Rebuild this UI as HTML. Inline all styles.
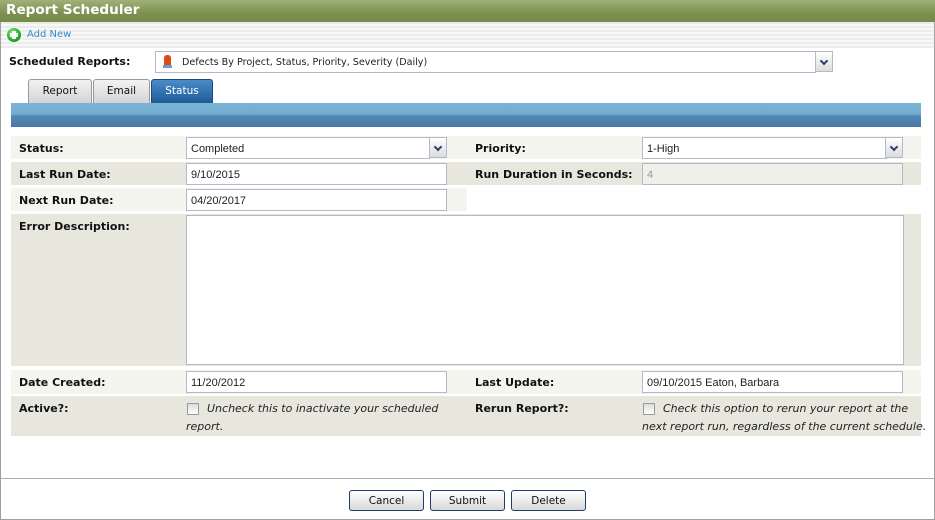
<!DOCTYPE html><html><head><style>
*{margin:0;padding:0;box-sizing:border-box}
body{width:935px;height:520px;position:relative;background:#fff;font-family:"Liberation Sans",sans-serif;overflow:hidden}
.a{position:absolute}
.lbl{position:absolute;font-family:"DejaVu Sans",sans-serif;font-weight:bold;font-size:11px;color:#111}
.inp{position:absolute;border:1px solid #b4b8c8;background:#fff;font-size:11px;color:#222;padding:5px 0 0 4px;height:22px}
.dd{position:absolute;width:18px;border:1px solid #b4b8c8;background:linear-gradient(#fff,#dcdcdc)}
.dd:after{content:"";position:absolute;left:5px;top:6px;width:4px;height:4px;border-right:2px solid #2a3e70;border-bottom:2px solid #2a3e70;transform:rotate(45deg)}
.tab{position:absolute;top:79px;height:24px;border:1px solid #999;border-bottom:none;border-radius:3px 3px 0 0;background:linear-gradient(#f2f2f2,#d4d4d4);font-family:"DejaVu Sans",sans-serif;font-size:10.5px;text-align:center;padding-top:5px;color:#111}
.btn{position:absolute;top:490px;height:21px;border:1px solid #203c6c;border-radius:3px;background:linear-gradient(#fff,#d8d8d8);font-family:"DejaVu Sans",sans-serif;font-size:10.5px;text-align:center;padding-top:4px;color:#111}
.it{position:absolute;font-family:"DejaVu Sans",sans-serif;font-style:italic;font-size:11px;color:#222;line-height:18px}
.cb{position:absolute;width:12px;height:12px;border:1px solid #999;background:linear-gradient(#ddd,#fff)}
</style></head><body>
<div class="a" style="left:0;top:0;width:935px;height:520px;border:1px solid #a0a0a0;border-top:none"></div>
<div class="a" style="left:0;top:0;width:935px;height:22px;background:linear-gradient(#9fb078,#7c9150 60%,#768a4a)"></div>
<div class="a" style="left:6px;top:2px;font-family:'DejaVu Sans',sans-serif;font-weight:bold;font-size:13.6px;color:#fff">Report Scheduler</div>
<div class="a" style="left:1px;top:22px;width:933px;height:26px;background:repeating-linear-gradient(#ececec 0,#ececec 2px,#f8f8f8 2px,#f8f8f8 4px)"></div>
<div class="a" style="left:7px;top:28px;width:14px;height:14px;border-radius:50%;background:radial-gradient(circle at 40% 35%,#8e8,#2a2 60%,#171);"></div>
<div class="a" style="left:12px;top:31px;width:4px;height:8px;background:#fff"></div>
<div class="a" style="left:10px;top:33px;width:8px;height:4px;background:#fff"></div>
<div class="a" style="left:27px;top:29px;font-family:'DejaVu Sans',sans-serif;font-size:10px;color:#3c88c8">Add New</div>
<div class="lbl" style="left:9px;top:55px">Scheduled Reports:</div>
<div class="inp" style="left:155px;top:51px;width:661px;height:22px;padding-left:26px;font-family:'DejaVu Sans',sans-serif;font-size:9.6px">Defects By Project, Status, Priority, Severity (Daily)</div>
<div class="a" style="left:164px;top:55px;width:7px;height:12px;background:#e04818;border-radius:3px 3px 1px 1px"></div>
<div class="a" style="left:163px;top:65px;width:9px;height:3px;background:#6aa0d0"></div>
<div class="dd" style="left:815px;top:51px;height:21px"></div>
<div class="tab" style="left:28px;width:64px">Report</div>
<div class="tab" style="left:93px;width:57px">Email</div>
<div class="tab" style="left:151px;width:62px;background:linear-gradient(#4a8cc8,#1e5a98);color:#fff;border-color:#1e4878">Status</div>
<div class="a" style="left:11px;top:103px;width:910px;height:24px;background:linear-gradient(#7ab4d4 0,#74acd0 45%,#5088b4 55%,#4a78a6)"></div>
<div class="a" style="left:11px;top:136px;width:910px;height:23px;background:#f5f5ef"></div>
<div class="a" style="left:11px;top:162px;width:910px;height:23px;background:#e8e7de"></div>
<div class="a" style="left:11px;top:188px;width:456px;height:23px;background:#f5f5ef"></div>
<div class="a" style="left:11px;top:214px;width:910px;height:152px;background:#e8e7de"></div>
<div class="a" style="left:11px;top:370px;width:910px;height:24px;background:#f5f5ef"></div>
<div class="a" style="left:11px;top:396px;width:910px;height:40px;background:#e8e7de"></div>
<div class="lbl" style="left:19px;top:142px">Status:</div>
<div class="inp" style="left:186px;top:137px;width:244px;height:22px;border-right:none">Completed</div>
<div class="dd" style="left:429px;top:137px;height:21px"></div>
<div class="lbl" style="left:475px;top:142px">Priority:</div>
<div class="inp" style="left:642px;top:137px;width:245px;height:22px;border-right:none">1-High</div>
<div class="dd" style="left:885px;top:137px;height:21px"></div>
<div class="lbl" style="left:19px;top:168px">Last Run Date:</div>
<div class="inp" style="left:186px;top:163px;width:261px">9/10/2015</div>
<div class="lbl" style="left:475px;top:168px">Run Duration in Seconds:</div>
<div class="inp" style="left:642px;top:163px;width:261px;background:#f0f0ea;color:#999">4</div>
<div class="lbl" style="left:19px;top:194px">Next Run Date:</div>
<div class="inp" style="left:186px;top:189px;width:261px">04/20/2017</div>
<div class="lbl" style="left:19px;top:220px">Error Description:</div>
<div class="inp" style="left:186px;top:215px;width:718px;height:150px"></div>
<div class="lbl" style="left:19px;top:376px">Date Created:</div>
<div class="inp" style="left:186px;top:371px;width:261px">11/20/2012</div>
<div class="lbl" style="left:475px;top:376px">Last Update:</div>
<div class="inp" style="left:642px;top:371px;width:261px">09/10/2015 Eaton, Barbara</div>
<div class="lbl" style="left:19px;top:402px">Active?:</div>
<div class="cb" style="left:187px;top:403px"></div>
<div class="it" style="left:186px;top:400px;width:270px;text-indent:21px">Uncheck this to inactivate your scheduled report.</div>
<div class="lbl" style="left:475px;top:402px">Rerun Report?:</div>
<div class="cb" style="left:643px;top:403px"></div>
<div class="it" style="left:642px;top:400px;width:292px;white-space:nowrap"><span style="padding-left:21px">Check this option to rerun your report at the</span><br>next report run, regardless of the current schedule.</div>
<div class="a" style="left:1px;top:478px;width:933px;height:1px;background:#a8b0c0"></div>
<div class="btn" style="left:349px;width:75px">Cancel</div>
<div class="btn" style="left:430px;width:75px">Submit</div>
<div class="btn" style="left:511px;width:75px">Delete</div>
</body></html>
